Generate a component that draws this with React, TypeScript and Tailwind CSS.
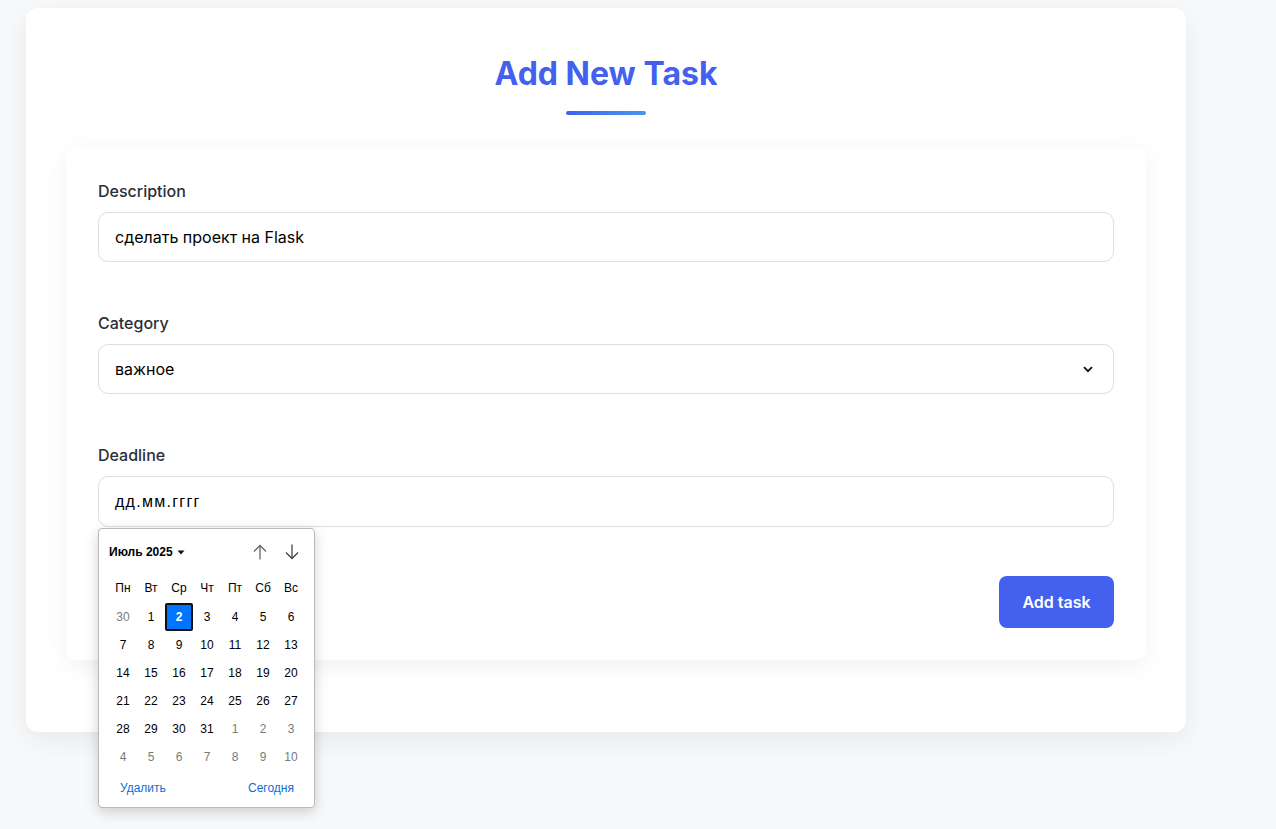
import React from 'react';

const weekDays = ['Пн', 'Вт', 'Ср', 'Чт', 'Пт', 'Сб', 'Вс'];

// July 2025, weeks starting on Monday
const weeks: { d: number; muted: boolean }[][] = [
  [30, 1, 2, 3, 4, 5, 6],
  [7, 8, 9, 10, 11, 12, 13],
  [14, 15, 16, 17, 18, 19, 20],
  [21, 22, 23, 24, 25, 26, 27],
  [28, 29, 30, 31, 1, 2, 3],
  [4, 5, 6, 7, 8, 9, 10],
].map((row, r) =>
  row.map((d, c) => ({ d, muted: (r === 0 && c === 0) || (r === 4 && c >= 4) || r === 5 }))
);

const DatePopup: React.FC = () => (
  <div
    className="absolute left-0 top-full mt-[1px] z-20 w-[217px] h-[280px] bg-white border border-[#b9b9b9] rounded-[4px] shadow-[0_4px_14px_rgba(0,0,0,0.18)] text-[12px] text-black"
    style={{ fontFamily: '"Liberation Sans", Arial, sans-serif' }}
  >
    {/* Header */}
    <div className="flex items-center justify-between pl-[10px] pr-[15px] h-[46px]">
      <div className="flex items-center gap-[4px] font-bold text-[12px]">
        <span>Июль 2025</span>
        <svg width="8" height="5" viewBox="0 0 8 5">
          <path d="M0.5 0.5 L7.5 0.5 L4 4.5 Z" fill="#111" />
        </svg>
      </div>
      <div className="flex items-center gap-[18px]">
        <svg width="14" height="16" viewBox="0 0 14 16" fill="none" stroke="#666" strokeWidth="1.3">
          <path d="M7 15.5 V1.5" />
          <path d="M1 7.5 L7 1.5 L13 7.5" />
        </svg>
        <svg width="14" height="16" viewBox="0 0 14 16" fill="none" stroke="#444" strokeWidth="1.3">
          <path d="M7 0.5 V14.5" />
          <path d="M1 8.5 L7 14.5 L13 8.5" />
        </svg>
      </div>
    </div>

    {/* Grid */}
    <div className="ml-[10px] w-[196px]">
      <div className="grid grid-cols-7 h-[28px] items-center pb-[2px]">
        {weekDays.map((w) => (
          <div key={w} className="text-center leading-[14px]">{w}</div>
        ))}
      </div>
      {weeks.map((row, r) => (
        <div key={r} className="grid grid-cols-7">
          {row.map((cell, c) => {
            const selected = r === 0 && c === 2;
            return (
              <div
                key={c}
                className={`h-[28px] flex items-center justify-center ${
                  selected
                    ? 'bg-[#0075ff] text-white font-bold border-2 border-[#111] rounded-[2px]'
                    : cell.muted
                    ? 'text-[#7a7a7a]'
                    : 'text-black'
                }`}
              >
                {cell.d}
              </div>
            );
          })}
        </div>
      ))}
    </div>

    {/* Footer */}
    <div className="flex items-center justify-between pl-[21px] pr-[20px] mt-[8px] text-[#0b6fd1]">
      <span>Удалить</span>
      <span>Сегодня</span>
    </div>
  </div>
);

const FieldLabel: React.FC<{ children: React.ReactNode }> = ({ children }) => (
  <label className="block text-[16px] leading-[24px] font-medium text-[#2b2f38] mb-[9px]">{children}</label>
);

export default function App() {
  return (
    <div
      className="min-h-screen bg-[#f8f9fb] pt-[8px] pl-[26px] pb-[97px]"
      style={{ fontFamily: 'Inter, "Noto Sans", sans-serif' }}
    >
      <div className="w-[1160px] bg-white rounded-[12px] shadow-[0_8px_30px_rgba(0,0,0,0.07)] px-[40px] pt-[46px] pb-[72px]">
        <h1 className="text-center text-[32px] leading-[40px] font-bold text-[#4361ee]">Add New Task</h1>
        <div className="mx-auto mt-[17px] w-[80px] h-[4px] rounded-full bg-gradient-to-r from-[#4361ee] to-[#4895ef]" />

        <div className="mt-[32px] bg-white rounded-[10px] shadow-[0_6px_24px_rgba(0,0,0,0.06)] p-[32px]">
          {/* Description */}
          <div>
            <FieldLabel>Description</FieldLabel>
            <div className="h-[50px] border border-[#dedede] rounded-[10px] px-[16px] flex items-center text-[16px] text-black">
              сделать проект на Flask
            </div>
          </div>

          {/* Category */}
          <div className="mt-[49px]">
            <FieldLabel>Category</FieldLabel>
            <div className="h-[50px] border border-[#dedede] rounded-[10px] pl-[16px] pr-[20px] flex items-center justify-between text-[16px] text-black">
              <span>важное</span>
              <svg width="10" height="7" viewBox="0 0 10 7" fill="none" stroke="#111" strokeWidth="1.8">
                <path d="M1 1.2 L5 5.2 L9 1.2" />
              </svg>
            </div>
          </div>

          {/* Deadline */}
          <div className="mt-[49px]">
            <FieldLabel>Deadline</FieldLabel>
            <div className="relative">
              <div
                className="h-[51px] border border-[#dedede] rounded-[10px] px-[16px] flex items-center text-[16px] text-black tracking-[0.08em]"
                style={{ fontFamily: '"Liberation Sans", Arial, sans-serif' }}
              >
                дд.мм.гггг
              </div>
              <DatePopup />
            </div>
          </div>

          <div className="flex justify-end mt-[49px]">
            <button className="w-[115px] h-[52px] rounded-[8px] bg-[#4361ee] text-white text-[16px] font-semibold">
              Add task
            </button>
          </div>
        </div>
      </div>
    </div>
  );
}
